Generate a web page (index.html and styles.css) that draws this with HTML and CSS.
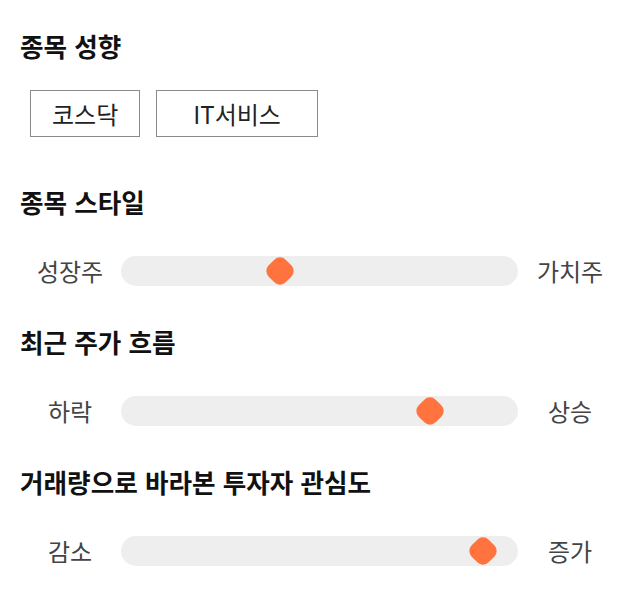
FILE: index.html
```html
<!DOCTYPE html>
<html lang="ko">
<head>
<meta charset="utf-8">
<title>종목 성향</title>
<link rel="stylesheet" href="styles.css">
</head>
<body>
<main class="page">
  <section class="section">
    <h2 class="title">종목 성향</h2>
    <div class="chips">
      <span class="chip">코스닥</span>
      <span class="chip chip-wide">IT서비스</span>
    </div>
  </section>
  <section class="section">
    <h2 class="title">종목 스타일</h2>
    <div class="slider-row">
      <span class="end-label">성장주</span>
      <div class="track"><span class="thumb" style="left: 40%"></span></div>
      <span class="end-label">가치주</span>
    </div>
  </section>
  <section class="section">
    <h2 class="title">최근 주가 흐름</h2>
    <div class="slider-row">
      <span class="end-label">하락</span>
      <div class="track"><span class="thumb" style="left: 77.75%"></span></div>
      <span class="end-label">상승</span>
    </div>
  </section>
  <section class="section">
    <h2 class="title">거래량으로 바라본 투자자 관심도</h2>
    <div class="slider-row">
      <span class="end-label">감소</span>
      <div class="track"><span class="thumb" style="left: 91.25%"></span></div>
      <span class="end-label">증가</span>
    </div>
  </section>
</main>
</body>
</html>
```

FILE: styles.css
```css
* {
  box-sizing: border-box;
}

html, body {
  margin: 0;
  padding: 0;
  background: #ffffff;
}

body {
  font-family: "Noto Sans CJK KR", "Noto Sans", sans-serif;
  color: #111111;
}

.page {
  width: 640px;
  padding: 30px 20px 0 20px;
  display: flex;
  flex-direction: column;
  gap: 30px;
}

.section {
  display: flex;
  flex-direction: column;
}

.title {
  margin: 0 0 28px 0;
  font-size: 25.6px;
  line-height: 32px;
  font-weight: 700;
  color: #111111;
}

.chips {
  display: flex;
  gap: 16px;
  padding-left: 10px;
  margin-bottom: 19px;
}

.chip {
  height: 47px;
  padding: 0 21px;
  border: 1px solid #8a8a8a;
  display: flex;
  align-items: center;
  justify-content: center;
  font-size: 24px;
  color: #222222;
}

.chip-wide {
  padding: 0 36px;
}

.slider-row {
  display: grid;
  grid-template-columns: 100px 1fr 100px;
  align-items: center;
  height: 50px;
}

.end-label {
  text-align: center;
  font-size: 24px;
  line-height: 30px;
  color: #444444;
}

.track {
  position: relative;
  height: 30px;
  margin-left: 1px;
  margin-right: 2px;
  border-radius: 15px;
  background: #eeeeee;
}

.thumb {
  position: absolute;
  top: 50%;
  width: 24px;
  height: 24px;
  border-radius: 8px;
  background: #ff743e;
  transform: translate(-50%, -50%) rotate(45deg);
}
```
